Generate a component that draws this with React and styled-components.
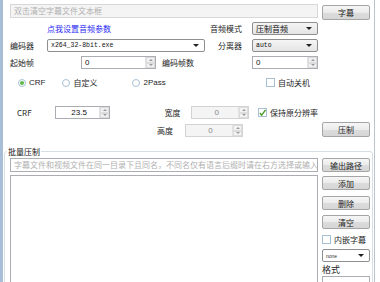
import React from "react";
import styled, { createGlobalStyle } from "styled-components";

const GlobalStyle = createGlobalStyle`
  html, body { margin: 0; padding: 0; background: #fff; }
  body { font-family: "Noto Sans CJK SC", "Noto Sans", sans-serif; font-size: 8px; color: #1e1e1e; }
`;

const Window = styled.div`
  width: 380px;
  height: 282px;
  overflow: hidden;
  box-sizing: border-box;
  background: #fff;
  border-left: 3px solid #a8bdd6;
  display: flex;
`;

const Content = styled.div`
  flex: 0 0 372px;
  box-sizing: border-box;
  padding: 4px 0 0 7px;
  border-right: 1px solid #b9c4cf;
`;

const Row = styled.div`
  display: flex;
  align-items: center;
  height: ${(p) => p.h || 13}px;
  margin-top: ${(p) => p.mt || 0}px;
  width: ${(p) => p.w || 308}px;
`;

const Main = styled.div`
  display: grid;
  grid-template-columns: 308px 48px;
  column-gap: 4px;
`;

const Field = styled.div`
  box-sizing: border-box;
  width: ${(p) => p.w || 308}px;
  height: ${(p) => p.h || 14}px;
  border: 1px solid ${(p) => (p.disabled ? "#d8d8d8" : "#abadb3")};
  background: ${(p) => (p.disabled ? "#f4f4f4" : "#fff")};
  color: #b0b0b0;
  padding: 0 3px;
  line-height: ${(p) => (p.h || 14) - 2}px;
  white-space: nowrap;
  overflow: hidden;
  flex-shrink: 0;
`;

const Button = styled.div`
  box-sizing: border-box;
  width: 48px;
  height: ${(p) => p.h || 15}px;
  margin-top: ${(p) => p.mt || 0}px;
  border: 1px solid #a5a5a5;
  border-radius: 2px;
  background: linear-gradient(#f6f6f6 0%, #ebebeb 50%, #dcdcdc 51%, #d6d6d6 100%);
  display: flex;
  align-items: center;
  justify-content: center;
  color: #222;
`;

const Label = styled.span`
  display: inline-block;
  width: ${(p) => (p.w ? p.w + "px" : "auto")};
  text-align: ${(p) => p.align || "left"};
  margin-left: ${(p) => p.ml || 0}px;
  margin-right: ${(p) => p.mr || 0}px;
  white-space: nowrap;
`;

const Link = styled.span`
  color: #2a2af5;
  margin-left: 37px;
`;

const Spacer = styled.div`
  flex: 1;
`;

const SelectBox = styled.div`
  box-sizing: border-box;
  width: ${(p) => p.w}px;
  height: 13px;
  border: 1px solid #8e8f8f;
  border-radius: 2px;
  background: ${(p) => (p.plain ? "#fff" : "linear-gradient(#f5f5f5, #e5e5e5)")};
  display: flex;
  align-items: center;
  padding: 0 0 0 3px;
  position: relative;
`;

const SelectText = styled.span`
  flex: 1;
  font-family: ${(p) => (p.mono ? '"Liberation Mono", monospace' : "inherit")};
  font-size: ${(p) => (p.mono ? "6.5px" : "inherit")};
  color: #111;
  white-space: nowrap;
`;

const Arrow = styled.span`
  width: 0;
  height: 0;
  border-left: 3px solid transparent;
  border-right: 3px solid transparent;
  border-top: 3px solid #222;
  margin-right: 5px;
`;

const SpinWrap = styled.div`
  box-sizing: border-box;
  width: ${(p) => p.w}px;
  height: ${(p) => p.h || 13}px;
  border: 1px solid ${(p) => (p.disabled ? "#d3d3d3" : "#abadb3")};
  background: ${(p) => (p.disabled ? "#f4f4f4" : "#fff")};
  display: flex;
  margin-left: ${(p) => p.ml || 0}px;
`;

const SpinValue = styled.div`
  flex: 1;
  padding-left: 3px;
  display: flex;
  align-items: center;
  justify-content: ${(p) => (p.center ? "center" : "flex-start")};
  color: ${(p) => (p.disabled ? "#888" : "#111")};
  font-family: "Liberation Sans", Arial, sans-serif;
  font-size: 8px;
`;

const SpinArrows = styled.div`
  width: 9px;
  display: flex;
  flex-direction: column;
  border-left: 1px solid #e2e2e2;
`;

const SpinHalf = styled.div`
  flex: 1;
  display: flex;
  align-items: center;
  justify-content: center;
  background: ${(p) => (p.disabled ? "#f4f4f4" : "#f0f0f0")};
  border: 1px solid #dcdcdc;
  &::after {
    content: "";
    border-left: 2px solid transparent;
    border-right: 2px solid transparent;
    ${(p) => (p.up ? "border-bottom" : "border-top")}: 2px solid #9a9a9a;
  }
`;

const Radio = styled.span`
  box-sizing: border-box;
  width: 8px;
  height: 8px;
  border-radius: 50%;
  border: 1px solid #a8c0d4;
  background: #fff;
  display: inline-flex;
  align-items: center;
  justify-content: center;
  margin-left: ${(p) => p.ml || 0}px;
  margin-right: 3px;
  &::after {
    content: "";
    width: 4px;
    height: 4px;
    border-radius: 50%;
    background: ${(p) => (p.on ? "#5bb84a" : "transparent")};
  }
`;

const Latin = styled.span`
  font-family: "Liberation Sans", Arial, sans-serif;
  font-size: 8px;
`;

const Check = styled.span`
  box-sizing: border-box;
  width: 9px;
  height: 9px;
  border: 1px solid #a8c0d4;
  background: #fff;
  display: inline-flex;
  align-items: center;
  justify-content: center;
  margin-left: ${(p) => p.ml || 0}px;
  margin-right: 3px;
`;

const Group = styled.div`
  position: relative;
  margin: 14px 0 0 -6px;
  width: 369px;
  height: 140px;
  box-sizing: border-box;
  border: 1px solid #d5dfe5;
  border-radius: 3px;
  padding: 6px 0 0 5px;
`;

const Legend = styled.span`
  position: absolute;
  top: -6px;
  left: 2px;
  background: #fff;
  padding: 0 1px;
  color: #111;
`;

const ListBox = styled.div`
  box-sizing: border-box;
  width: 308px;
  height: 120px;
  margin-top: 3px;
  border: 1px solid #abadb3;
  background: #fff;
`;

const SideColumn = styled.div`
  display: flex;
  flex-direction: column;
`;

const SideCheck = styled.div`
  display: flex;
  align-items: center;
  margin-top: 5px;
  height: 10px;
`;

const SmallSelect = styled(SelectBox)`
  margin-top: 5px;
`;

const SmallText = styled.span`
  flex: 1;
  font-family: "Liberation Sans", Arial, sans-serif;
  font-size: 5px;
  color: #333;
`;

const FormatLabel = styled.div`
  margin-top: 2px;
  font-size: 9px;
  line-height: 12px;
`;

function Spin({ w, value, center, disabled, ml }) {
  return (
    <SpinWrap w={w} disabled={disabled} ml={ml}>
      <SpinValue center={center} disabled={disabled}>{value}</SpinValue>
      <SpinArrows>
        <SpinHalf up disabled={disabled} />
        <SpinHalf disabled={disabled} />
      </SpinArrows>
    </SpinWrap>
  );
}

function Select({ w, value, mono, plain }) {
  return (
    <SelectBox w={w} plain={plain}>
      <SelectText mono={mono}>{value}</SelectText>
      <Arrow />
    </SelectBox>
  );
}

export default function App() {
  return (
    <>
      <GlobalStyle />
      <Window>
        <Content>
          <Main>
            <div>
              <Field disabled>双击清空字幕文件文本框</Field>
              <Row mt={4}>
                <Link>点我设置音频参数</Link>
                <Spacer />
                <Label mr={10}>音频模式</Label>
                <Select w={66} value="压制音频" />
              </Row>
              <Row mt={4}>
                <Label w={37}>编码器</Label>
                <Select w={158} value="x264_32-8bit.exe" mono plain />
                <Spacer />
                <Label mr={10}>分离器</Label>
                <Select w={66} value="auto" mono />
              </Row>
              <Row mt={4}>
                <Label w={71}>起始帧</Label>
                <Spin w={75} value="0" />
                <Label ml={6}>编码帧数</Label>
                <Spacer />
                <Spin w={66} value="0" />
              </Row>
              <Row mt={8} h={11}>
                <Radio ml={8} on />
                <Latin>CRF</Latin>
                <Radio ml={17} />
                <Label>自定义</Label>
                <Radio ml={35} />
                <Latin>2Pass</Latin>
                <Spacer />
                <Check />
                <Label mr={8}>自动关机</Label>
              </Row>
              <Row mt={18} h={13}>
                <Label w={38} ml={7}>CRF</Label>
                <Spin w={56} value="23.5" center />
                <Label ml={54} w={27}>宽度</Label>
                <Spin w={58} value="0" center disabled />
                <Check ml={9}>
                  <svg width="8" height="8" viewBox="0 0 8 8">
                    <path d="M1 4 L3 6.5 L7.5 0.5" fill="none" stroke="#4a9a2a" strokeWidth="1.6" />
                  </svg>
                </Check>
                <Label>保持原分辨率</Label>
              </Row>
              <Row mt={5} h={13}>
                <Label ml={147} w={28}>高度</Label>
                <Spin w={58} value="0" center disabled />
              </Row>
            </div>
            <SideColumn>
              <Button mt={1}>字幕</Button>
              <Spacer />
              <Button mt={0}>压制</Button>
            </SideColumn>
          </Main>
          <Group>
            <Legend>批量压制</Legend>
            <Main>
              <div>
                <Field>字幕文件和视频文件在同一目录下且同名，不同名仅有语言后缀时请在右方选择或输入</Field>
                <ListBox />
              </div>
              <SideColumn>
                <Button h={14}>输出路径</Button>
                <Button h={14} mt={4}>添加</Button>
                <Button h={14} mt={6}>删除</Button>
                <Button h={14} mt={5}>清空</Button>
                <SideCheck>
                  <Check />
                  <Label>内嵌字幕</Label>
                </SideCheck>
                <SmallSelect w={48} plain>
                  <SmallText>none</SmallText>
                  <Arrow />
                </SmallSelect>
                <FormatLabel>格式</FormatLabel>
                <Field w={48} h={13} />
              </SideColumn>
            </Main>
          </Group>
        </Content>
      </Window>
    </>
  );
}
